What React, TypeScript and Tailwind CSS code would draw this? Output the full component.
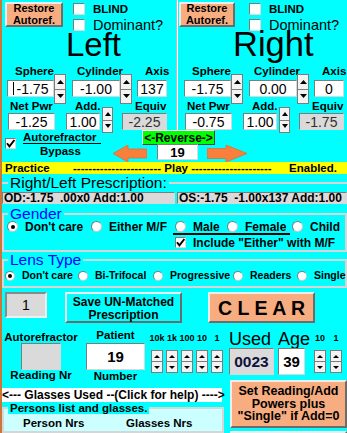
import React from 'react';

type Eye = { sph: string; cyl: string; axis: string; net: string; add: string; equiv: string };

const LEFT: Eye = { sph: '-1.75', cyl: '-1.00', axis: '137', net: '-1.25', add: '1.00', equiv: '-2.25' };
const RIGHT: Eye = { sph: '-1.75', cyl: '0.00', axis: '0', net: '-0.75', add: '1.00', equiv: '-1.75' };

const raised = 'border-2 border-t-[#ececec] border-l-[#ececec] border-b-[#6c6c6c] border-r-[#6c6c6c]';
const sunken = 'border border-t-[#7c7c7c] border-l-[#7c7c7c] border-b-[#d8d8d8] border-r-[#d8d8d8]';
const orange = 'bg-[#f7ad80]';
const gray = 'bg-[#dadada]';

function Tri({ down = false, w = 7, h = 4 }: { down?: boolean; w?: number; h?: number }) {
  return (
    <svg width={w} height={h} viewBox={`0 0 ${w} ${h}`}>
      <polygon points={down ? `0,0 ${w},0 ${w / 2},${h}` : `0,${h} ${w / 2},0 ${w},${h}`} fill="black" />
    </svg>
  );
}

function Spin({ className = '', tw = 7, th = 4 }: { className?: string; tw?: number; th?: number }) {
  const half = 'flex-1 flex items-center justify-center bg-[#f3f3f3] border border-[#7c7c7c]';
  return (
    <div className={`flex flex-col shrink-0 ${className}`}>
      <div className={half}>
        <Tri w={tw} h={th} />
      </div>
      <div className={`${half} border-t-0`}>
        <Tri down w={tw} h={th} />
      </div>
    </div>
  );
}

function Field({ children, className = '', grey = false, cursor = false }: { children?: React.ReactNode; className?: string; grey?: boolean; cursor?: boolean }) {
  return (
    <div className={`flex items-center justify-center shrink-0 ${sunken} ${grey ? `${gray} text-[#303030]` : 'bg-white'} text-[14px] leading-[14px] ${className}`}>
      {cursor && <span className="w-[1px] h-[13px] bg-black mr-[3px]" />}
      {children}
    </div>
  );
}

function Check({ checked = false, size = 12 }: { checked?: boolean; size?: number }) {
  return (
    <div
      className={`shrink-0 flex items-center justify-center bg-white ${sunken} ${size === 12 ? 'w-[12px] h-[12px]' : 'w-[11px] h-[11px]'}`}
    >
      {checked && (
        <svg width="9" height="9" viewBox="0 0 9 9">
          <polyline points="1,4.2 3.4,7.4 8.4,1" fill="none" stroke="black" strokeWidth="1.9" />
        </svg>
      )}
    </div>
  );
}

function Radio({ on = false, small = false }: { on?: boolean; small?: boolean }) {
  return (
    <div
      className={`shrink-0 rounded-full bg-white border border-[#7c7c7c] border-b-[#c8c8c8] border-r-[#c8c8c8] flex items-center justify-center ${small ? 'w-[10px] h-[10px]' : 'w-[11px] h-[11px]'}`}
    >
      {on && <div className="w-[4px] h-[4px] rounded-full bg-black" />}
    </div>
  );
}

function EyePanel({ side, d }: { side: 'L' | 'R'; d: Eye }) {
  const L = side === 'L';
  return (
    <div className={`${L ? 'w-[174px]' : 'w-[169px] pl-[1px]'} h-[130px] flex flex-col shrink-0`}>
      <div className="flex h-[28px]">
        <div
          className={`${L ? 'ml-[3px] w-[58px]' : 'w-[56px]'} mt-[2px] h-[25px] ${orange} ${raised} flex flex-col items-center justify-center text-[11px] font-bold leading-[11.5px]`}
        >
          <span>Restore</span>
          <span>Autoref.</span>
        </div>
        <div className={`${L ? 'ml-[10px]' : 'ml-[14px]'} mt-[3px] flex flex-col gap-[4px]`}>
          <div className="flex items-center h-[12px]">
            <Check />
            <span className="ml-[8px] text-[11.5px] font-bold leading-[12px]">BLIND</span>
          </div>
          <div className="flex items-center h-[12px]">
            <Check />
            <span className="ml-[8px] text-[14.5px] leading-[14px]">Dominant?</span>
          </div>
        </div>
      </div>
      <div className={`h-[33px] leading-[33px] ${L ? 'ml-[64px] text-[33px]' : 'ml-[54px] text-[34.5px]'}`}>
        {L ? 'Left' : 'Right'}
      </div>
      <div className="mt-[4px] h-[12px] flex text-[11.5px] font-bold leading-[12px]">
        <span className="w-[62px] pl-[13px]">Sphere</span>
        <span className="w-[68px] pl-[13px]">Cylinder</span>
        <span className="pl-[13px]">Axis</span>
      </div>
      <div className="mt-[3px] h-[17px] flex items-start">
        <Field className="ml-[5px] w-[47px] h-[17px]" cursor={L}>
          {d.sph}
        </Field>
        <Spin className="w-[12px] h-[30px] -mt-[6px]" />
        <Field className="ml-[6px] w-[48px] h-[17px]">{d.cyl}</Field>
        <Spin className="w-[12px] h-[30px] -mt-[6px]" />
        <Field className="ml-[5px] w-[30px] h-[17px]">{d.axis}</Field>
      </div>
      <div className="mt-[3px] h-[12px] flex text-[11.5px] font-bold leading-[12px]">
        <span className="w-[62px] pl-[8px]">Net Pwr</span>
        <span className="w-[68px] pl-[11px]">Add.</span>
        <span className="pl-[3px]">Equiv</span>
      </div>
      <div className="mt-[1px] h-[17px] flex items-start">
        <Field className="ml-[6px] w-[47px] h-[17px]">{d.net}</Field>
        <Field className="ml-[11px] w-[34px] h-[17px]">{d.add}</Field>
        <Spin className="ml-[2px] w-[11px] h-[26px] -mt-[6px]" tw={6} />
        <Field grey className="ml-[9px] w-[45px] h-[17px]">
          {d.equiv}
        </Field>
      </div>
    </div>
  );
}

function Arrow({ dir }: { dir: 'l' | 'r' }) {
  return dir === 'l' ? (
    <svg width="34" height="17" viewBox="0 0 34 17" className="shrink-0">
      <polygon points="0,8.5 15,0 15,4 34,4 34,13 15,13 15,17" fill="#f8803c" stroke="#e8692c" strokeWidth="0.8" />
    </svg>
  ) : (
    <svg width="40" height="17" viewBox="0 0 40 17" className="shrink-0">
      <polygon points="40,8.5 19,0 19,3.5 0,3.5 0,13.5 19,13.5 19,17" fill="#f8803c" stroke="#e8692c" strokeWidth="0.8" />
    </svg>
  );
}

function SpinCol({ label, className = '' }: { label: string; className?: string }) {
  return (
    <div className={`w-[12px] flex flex-col items-center shrink-0 ${className}`}>
      <span className="mt-[11px] text-[9px] font-bold leading-[9px] whitespace-nowrap">{label}</span>
      <Spin className="mt-[7px] w-[12px] h-[23px]" tw={6} th={3} />
    </div>
  );
}

function GenderItem({ w, label, on = false }: { w: string; label: string; on?: boolean }) {
  return (
    <div className={`flex items-center shrink-0 ${w}`}>
      <Radio on={on} />
      <span className="ml-[7px] whitespace-nowrap">{label}</span>
    </div>
  );
}

function LensItem({ w, label, on = false }: { w: string; label: string; on?: boolean }) {
  return (
    <div className={`flex items-center shrink-0 ${w}`}>
      <Radio small on={on} />
      <span className="ml-[7px] whitespace-nowrap">{label}</span>
    </div>
  );
}

export default function App() {
  return (
    <div className="w-[347px] h-[433px] overflow-hidden bg-[#00ffff] border-l-2 border-[#c87838] text-black font-['Liberation_Sans',Arial,sans-serif] flex flex-col">
      {/* Left / Right eye panels */}
      <div className="flex h-[130px] shrink-0">
        <EyePanel side="L" d={LEFT} />
        <div className="w-[2px] h-[130px] bg-white border-l border-[#bdbdbd] shrink-0" />
        <EyePanel side="R" d={RIGHT} />
      </div>

      {/* bypass + reverse */}
      <div className="flex h-[32px] shrink-0">
        <div className="ml-[3px] mt-[8px]">
          <Check checked size={11} />
        </div>
        <div className="ml-[7px] w-[78px] flex flex-col text-[11.5px] font-bold">
          <div className="mt-[2px] h-[12px] leading-[11px] border-b border-black">Autorefractor</div>
          <div className="mt-[1px] pl-[17px] leading-[12px]">Bypass</div>
        </div>
        <div className="ml-[12px] flex flex-col">
          <div className="ml-[29px] w-[73px] h-[15px] bg-[#00ff00] border border-t-white border-l-white border-b-[#3c3c3c] border-r-[#3c3c3c] flex items-center justify-center text-[12px] font-bold leading-[12px]">
            &lt;-Reverse-&gt;
          </div>
          <div className="flex">
            <Arrow dir="l" />
            <div className={`ml-[10px] -mt-[1px] w-[41px] h-[16px] bg-white ${sunken} flex items-center justify-center text-[13px] font-bold leading-[13px]`}>
              19
            </div>
            <div className="ml-[9px]">
              <Arrow dir="r" />
            </div>
          </div>
        </div>
      </div>

      {/* practice bar */}
      <div className="h-[12px] shrink-0 bg-[#ffff00] flex text-[11.5px] font-bold leading-[12px] whitespace-pre">
        <span className="w-[71px] pl-[3px]">Practice</span>
        <span>{'-'.repeat(23)} Play {'-'.repeat(21)}</span>
        <span className="ml-auto mr-[10px]">Enabled.</span>
      </div>

      {/* prescription */}
      <fieldset className="mt-[1px] border-t-2 border-[#d6d6d6] shrink-0">
        <legend className="ml-[6px] px-[2px] text-[15.5px] leading-[15px]">Right/Left Prescription:</legend>
        <div className="mt-[2px] flex h-[12px] text-[12px] font-bold leading-[10px] whitespace-pre">
          <div className={`w-[173px] ${gray} ${sunken} pl-[1px] overflow-hidden`}>OD:-1.75  .00x0 Add:1.00</div>
          <div className={`ml-[2px] w-[170px] ${gray} ${sunken} pl-[1px] overflow-hidden`}>OS:-1.75  -1.00x137 Add:1.00</div>
        </div>
      </fieldset>

      {/* gender */}
      <fieldset className="mt-[2px] border-2 border-[#d6d6d6] pb-[2px] shrink-0">
        <legend className="ml-[4px] px-[2px] text-[15.5px] leading-[15px] text-[#0000ff]">Gender</legend>
        <div className="flex h-[11px] items-center text-[12px] font-bold leading-[12px] pl-[3px]">
          <GenderItem w="w-[84px]" label="Don't care" on />
          <GenderItem w="w-[84px]" label="Either M/F" />
          <GenderItem w="w-[52px]" label="Male" />
          <GenderItem w="w-[65px]" label="Female" />
          <GenderItem w="w-[50px]" label="Child" />
        </div>
        <div className="ml-[169px] mt-[1px] w-[117px] h-[2px] bg-black" />
        <div className="mt-[2px] ml-[171px] flex items-center h-[11px] text-[12px] font-bold leading-[12px]">
          <Check checked size={11} />
          <span className="ml-[7px] whitespace-nowrap">Include "Either" with M/F</span>
        </div>
      </fieldset>

      {/* lens type */}
      <fieldset className="border-2 border-[#d6d6d6] pb-[5px] shrink-0">
        <legend className="ml-[4px] px-[2px] text-[15.5px] leading-[15px] text-[#0000ff]">Lens Type</legend>
        <div className="mt-[3px] flex h-[11px] items-center text-[10.5px] font-bold leading-[11px] pl-[1px]">
          <LensItem w="w-[73px]" label="Don't care" on />
          <LensItem w="w-[75px]" label="Bi-Trifocal" />
          <LensItem w="w-[80px]" label="Progressive" />
          <LensItem w="w-[64px]" label="Readers" />
          <LensItem w="w-[46px]" label="Single" />
        </div>
      </fieldset>

      {/* buttons */}
      <div className="mt-[4px] h-[31px] flex items-start shrink-0">
        <div className={`ml-[3px] w-[42px] h-[26px] ${gray} border-2 border-t-[#8a8a8a] border-l-[#8a8a8a] border-b-[#f0f0f0] border-r-[#f0f0f0] flex items-center justify-center text-[14px] leading-[14px]`}>
          1
        </div>
        <div className={`ml-[18px] w-[117px] h-[31px] ${raised} pt-[2px] flex flex-col items-center justify-center text-[12px] font-bold leading-[13px]`}>
          <span>Save UN-Matched</span>
          <span>Prescription</span>
        </div>
        <div className={`ml-[26px] w-[107px] h-[31px] ${orange} ${raised} flex items-center justify-center text-[19.5px] font-bold leading-[20px] whitespace-pre`}>
          C L E A R
        </div>
      </div>

      {/* bottom area */}
      <div className="flex flex-1 min-h-0">
        <div className="w-[227px] flex flex-col shrink-0">
          <div className="h-[65px] flex shrink-0">
            <div className="w-[78px] flex flex-col items-center text-[11.5px] font-bold leading-[12px]">
              <span className="mt-[8px] whitespace-nowrap">Autorefractor</span>
              <div className={`w-[40px] h-[27px] ${gray} ${sunken}`} />
              <span className="-mt-[1px] whitespace-nowrap">Reading Nr</span>
            </div>
            <div className="ml-[6px] w-[59px] flex flex-col items-center text-[11.5px] font-bold leading-[12px]">
              <span className="mt-[6px]">Patient</span>
              <div className={`mt-[2px] w-[59px] h-[27px] bg-white ${sunken} flex items-center justify-center text-[15px] leading-[15px]`}>
                19
              </div>
              <span>Number</span>
            </div>
            <div className="ml-[6px] flex gap-[3px]">
              <SpinCol label="10k" />
              <SpinCol label="1k" />
              <SpinCol label="100" />
              <SpinCol label="10" />
              <SpinCol label="1" />
            </div>
          </div>
          <div className="w-[220px] h-[14px] bg-white text-[12px] font-bold leading-[14px] whitespace-pre shrink-0">
            {'<--- Glasses Used --(Click for help) ---->'}
          </div>
          <fieldset className="w-[222px] border-2 border-[#d6d6d6] bg-[#ccffff] flex-1">
            <legend className="ml-[4px] px-[2px] text-[11.5px] font-bold leading-[12px] bg-[#00ffff]">
              Persons list and glasses.
            </legend>
            <div className="mt-[3px] flex text-[11.5px] font-bold leading-[12px]">
              <span className="w-[122px] pl-[19px]">Person Nrs</span>
              <span>Glasses Nrs</span>
            </div>
          </fieldset>
        </div>

        <div className="w-[118px] flex flex-col shrink-0">
          <div className="h-[57px] flex shrink-0">
            <div className="w-[85px] flex flex-col">
              <div className="mt-[7px] h-[18px] flex text-[18px] leading-[18px]">
                <span>Used</span>
                <span className="ml-[7px]">Age</span>
              </div>
              <div className="flex">
                <div className={`w-[45px] h-[27px] ${gray} ${sunken} flex items-center justify-center text-[15.5px] font-bold leading-[16px] text-[#10103a]`}>
                  0023
                </div>
                <div className={`ml-[4px] w-[27px] h-[27px] bg-white ${sunken} flex items-center justify-center text-[15px] font-bold leading-[16px]`}>
                  39
                </div>
              </div>
            </div>
            <SpinCol label="10" />
            <SpinCol label="1" className="ml-[4px]" />
          </div>
          <div className={`ml-[1px] w-[117px] h-[48px] ${orange} ${raised} flex flex-col items-center justify-center text-[12.5px] font-bold leading-[12.5px] shrink-0`}>
            <span>Set Reading/Add</span>
            <span>Powers plus</span>
            <span>"Single" if Add=0</span>
          </div>
          <div className={`ml-[1px] mt-[3px] w-[117px] h-[10px] ${orange} ${raised} shrink-0`} />
        </div>
      </div>
    </div>
  );
}
